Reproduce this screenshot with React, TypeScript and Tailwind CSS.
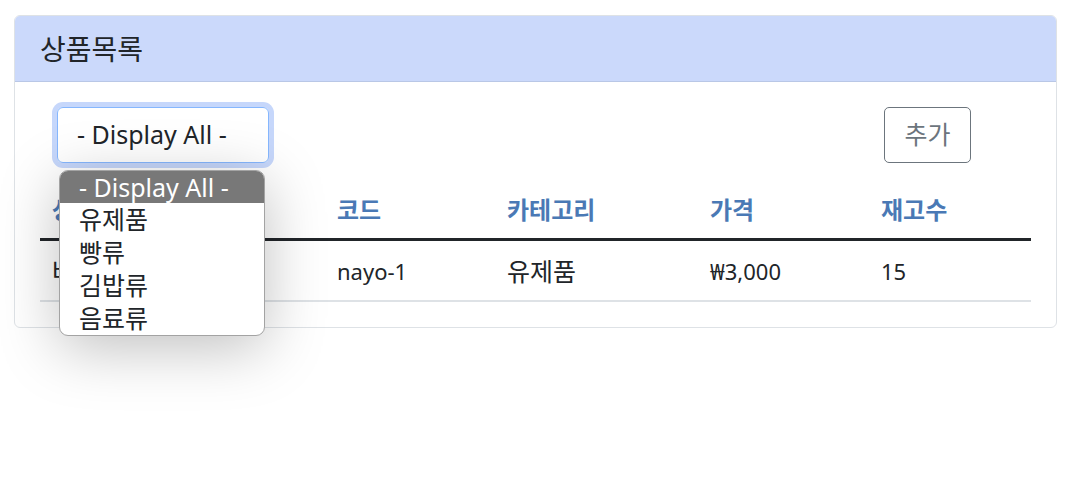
const options = ["- Display All -", "유제품", "빵류", "김밥류", "음료류"];

const columns = [
  { label: "상품명", width: "w-[285px]" },
  { label: "코드", width: "w-[170px]" },
  { label: "카테고리", width: "w-[203px]" },
  { label: "가격", width: "w-[171px]" },
  { label: "재고수", width: "" },
];

// ko: hangul cells get a bigger size so their width matches the reference
const rows = [
  [
    { v: "바나나우유", ko: true },
    { v: "nayo-1", ko: false },
    { v: "유제품", ko: true },
    { v: "₩3,000", ko: false },
    { v: "15", ko: false },
  ],
];

export default function App() {
  return (
    <div className="min-h-[495px] bg-white pl-[14px] pt-[15px] font-['Noto_Sans','Noto_Sans_CJK_KR',sans-serif] text-[#212529]">
      <div className="w-[1043px] rounded-[6px] border border-[#dee2e6]">
        <div className="flex h-[66px] items-center rounded-t-[5px] border-b border-[#b9c7e6] bg-[#cbd9fb] px-[25px] text-[28px]">
          상품목록
        </div>
        <div className="px-[25px] pb-[25px] pt-[25px]">
          <div className="flex items-center justify-between pl-[17px] pr-[60px]">
            <div className="relative">
              <div className="flex h-[56px] w-[212px] items-center rounded-[6px] border border-[#86b7fe] px-[19px] text-[25px] shadow-[0_0_0_5px_#c6d7fb]">
                - Display All -
              </div>
              <div className="absolute left-[2px] top-[63px] z-10 w-[206px] overflow-hidden rounded-[9px] border border-[#a3a3a3] bg-white text-[25px] leading-[33px] shadow-[0_12px_60px_rgba(0,0,0,0.25)]">
                {options.map((o, i) => (
                  <div
                    key={o}
                    className={
                      i === 0
                        ? "h-[32px] bg-[#787878] pl-[19px] leading-[32px] text-white"
                        : "h-[33px] pl-[19px]"
                    }
                  >
                    {o}
                  </div>
                ))}
              </div>
            </div>
            <button className="flex h-[56px] w-[87px] items-center justify-center rounded-[5px] border border-[#6c757d] text-[25px] text-[#6c757d]">
              추가
            </button>
          </div>
          <table className="mt-[17px] w-full border-collapse text-left">
            <thead>
              <tr className="border-b-[3px] border-[#212529]">
                {columns.map((c) => (
                  <th
                    key={c.label}
                    className={`${c.width} h-[59px] px-[12px] pt-[2px] text-[24px] font-bold text-[#4a79b5]`}
                  >
                    {c.label}
                  </th>
                ))}
              </tr>
            </thead>
            <tbody>
              {rows.map((r) => (
                <tr key={r[1].v} className="border-b-2 border-[#dee2e6]">
                  {r.map((c, i) => (
                    <td
                      key={i}
                      className={`h-[62px] px-[12px] pt-[2px] ${c.ko ? "text-[25px]" : "text-[22px]"}`}
                    >
                      {c.v}
                    </td>
                  ))}
                </tr>
              ))}
            </tbody>
          </table>
        </div>
      </div>
    </div>
  );
}
